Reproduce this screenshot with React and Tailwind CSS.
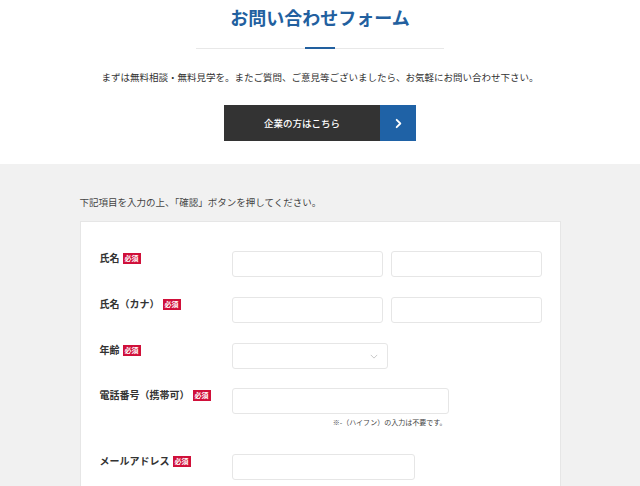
import React from 'react';

const font = { fontFamily: '"Noto Sans CJK JP", "Noto Sans", sans-serif' };

function Required() {
  return (
    <span className="ml-[3px] inline-flex h-[11px] items-center bg-[#d0103a] px-[2px] text-[7px] leading-none text-white">必須</span>
  );
}

function Label({ children }) {
  return (
    <div className="flex w-[132px] shrink-0 items-center self-start text-[10px] font-bold leading-[14px] text-[#333]">
      <span>{children}</span>
      <Required />
    </div>
  );
}

function Field({ className }) {
  return <div className={`h-[26px] rounded-[3px] border border-[#e6e6e6] bg-white ${className}`} />;
}

export default function App() {
  return (
    <div className="min-h-[486px] w-[640px] bg-[#f1f1f1]" style={font}>
      <section className="flex h-[164px] flex-col items-center bg-white">
        <h1 className="mt-[5px] text-[18px] font-bold leading-[24px] text-[#22609f]">お問い合わせフォーム</h1>
        <div className="relative mt-[19px] h-px w-[248px] bg-[#e8e8e8]">
          <div className="absolute left-[109px] top-[-1px] h-[2px] w-[30px] bg-[#22609f]" />
        </div>
        <p className="mt-[21px] text-[9.5px] leading-[14px] text-[#333]">まずは無料相談・無料見学を。またご質問、ご意見等ございましたら、お気軽にお問い合わせ下さい。</p>
        <button className="mt-[21px] flex h-[36px] w-[192px]">
          <span className="flex h-full flex-1 items-center justify-center bg-[#333333] text-[9.5px] font-medium text-white">企業の方はこちら</span>
          <span className="flex h-full w-[36px] items-center justify-center bg-[#1f62a6]">
            <svg viewBox="0 0 12 12" width="11" height="11" fill="none" stroke="white" strokeWidth="2" strokeLinecap="round" strokeLinejoin="round"><path d="M4 2l4 4-4 4" /></svg>
          </span>
        </button>
      </section>

      <div className="mx-auto w-[481px] pt-[31px]">
        <p className="text-[9.5px] leading-[14px] text-[#444]">下記項目を入力の上、「確認」ボタンを押してください。</p>
        <div className="mt-[12px] border border-[#e6e6e6] bg-white px-[19px] pt-[29px] pb-[20px]">
          <div className="flex">
            <Label>氏名</Label>
            <div className="flex gap-[8px]">
              <Field className="w-[151px]" />
              <Field className="w-[151px]" />
            </div>
          </div>
          <div className="mt-[20px] flex">
            <Label>氏名（カナ）</Label>
            <div className="flex gap-[8px]">
              <Field className="w-[151px]" />
              <Field className="w-[151px]" />
            </div>
          </div>
          <div className="mt-[20px] flex">
            <Label>年齢</Label>
            <div className="flex h-[26px] w-[156px] items-center justify-end rounded-[3px] border border-[#e6e6e6] pr-[9px]">
              <svg viewBox="0 0 10 6" width="8" height="5" fill="none" stroke="#bbb" strokeWidth="1"><path d="M1 1l4 4 4-4" /></svg>
            </div>
          </div>
          <div className="mt-[19px] flex">
            <Label>電話番号（携帯可）</Label>
            <div className="flex w-[217px] flex-col">
              <Field className="w-[217px]" />
              <p className="mt-[2px] pr-[2px] text-right text-[7px] leading-[12px] text-[#444]">※-（ハイフン）の入力は不要です。</p>
            </div>
          </div>
          <div className="mt-[26px] flex">
            <Label>メールアドレス</Label>
            <Field className="w-[183px]" />
          </div>
        </div>
      </div>
    </div>
  );
}
